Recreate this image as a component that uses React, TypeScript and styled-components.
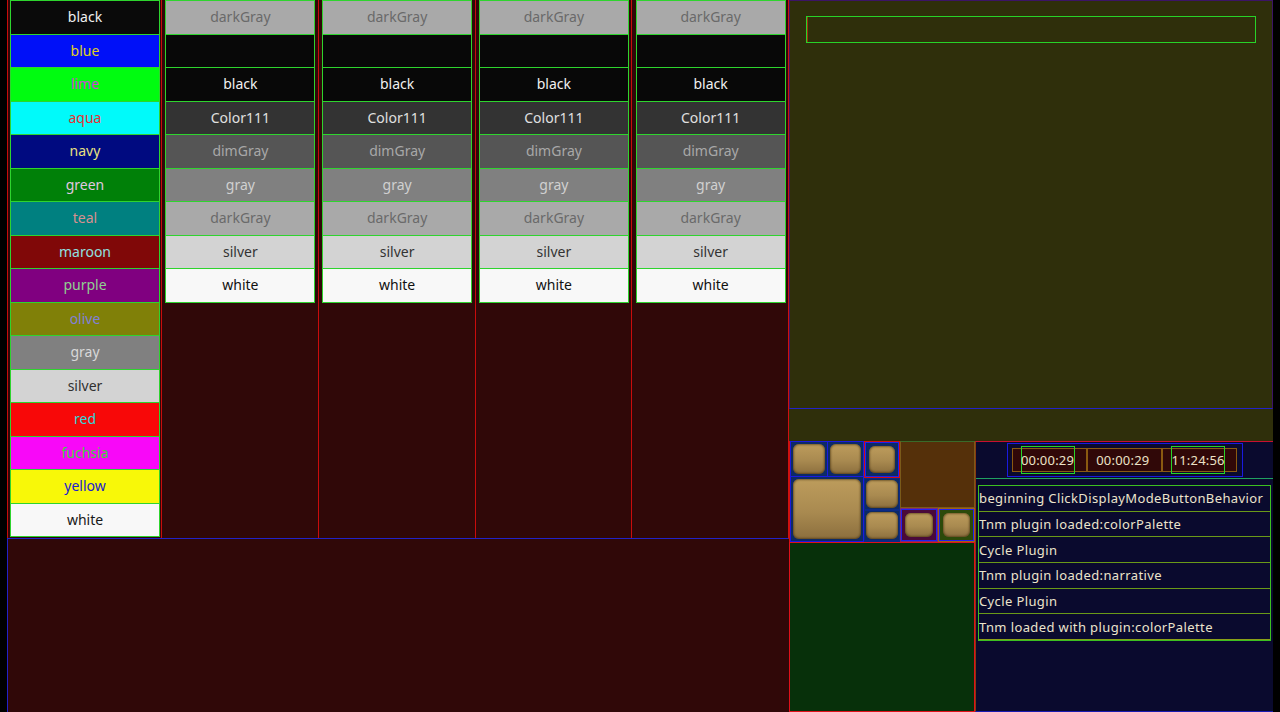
import React from "react";
import styled, { createGlobalStyle } from "styled-components";

const Global = createGlobalStyle`
  html, body { margin: 0; padding: 0; background: #000; }
  body { font-family: "Noto Sans", "DejaVu Sans", sans-serif; }
  * { box-sizing: border-box; }
`;

const Page = styled.div`
  width: 1280px;
  height: 712px;
  display: flex;
  padding-left: 7px;
  padding-right: 7px;
  background: #000;
  overflow: hidden;
`;

const LeftPanel = styled.div`
  width: 782px;
  display: flex;
  flex-direction: column;
  background: #300808;
`;

const ColumnsRow = styled.div`
  height: 539px;
  display: flex;
  border-bottom: 1px solid #2222c8;
  border-right: 1px solid #d01010;
`;

const Column = styled.div<{ $first?: boolean }>`
  flex: ${(p) => (p.$first ? "0 0 154px" : "1")};
  display: flex;
  justify-content: ${(p) => (p.$first ? "flex-start" : "center")};
  padding-left: ${(p) => (p.$first ? "2px" : "1px")};
  align-items: flex-start;
  border-left: 1px solid #c80c0c;
`;

const CellStack = styled.div`
  width: 150px;
  display: flex;
  flex-direction: column;
  gap: 1px;
  padding: 1px;
  background: #2ed42e;
`;

const Cell = styled.div<{ $bg: string; $fg: string }>`
  height: 32.5px;
  display: flex;
  align-items: center;
  justify-content: center;
  background: ${(p) => p.$bg};
  color: ${(p) => p.$fg};
  font-size: 14px;
  line-height: 1;
`;

const LeftBottom = styled.div`
  flex: 1;
  border-left: 1px solid #2222c8;
`;

const RightPanel = styled.div`
  flex: 1;
  display: flex;
  flex-direction: column;
`;

const TopPanel = styled.div`
  height: 409px;
  background: #2f2f0b;
  border: 1px solid #3c1466;
  border-bottom: 1px solid #2222c8;
  padding: 15px 16px;
`;

const InputBox = styled.div`
  height: 27px;
  border: 1px solid #28d228;
  box-shadow: inset 1px 0 0 #a03010;
`;

const Strip = styled.div`
  height: 32px;
  background: #2f2f0b;
`;

const BottomRow = styled.div`
  flex: 1;
  display: flex;
`;

const LeftStack = styled.div`
  width: 186px;
  display: flex;
  flex-direction: column;
`;

const ButtonArea = styled.div`
  height: 101px;
  display: flex;
  border-left: 1px solid #d01010;
`;

const GroupA = styled.div`
  width: 74px;
  display: grid;
  grid-template-columns: 1fr 1fr;
  grid-template-rows: 34px 1fr;
  gap: 1px;
  padding: 1px;
  background: #1a1ae0;
`;

const GroupCell = styled.div<{ $span?: boolean }>`
  background: #0d2a66;
  padding: 2px;
  display: flex;
  ${(p) => (p.$span ? "grid-column: 1 / span 2;" : "")}
`;

const GroupB = styled.div`
  width: 36px;
  display: flex;
  flex-direction: column;
  gap: 2px;
  padding: 1px 1px 2px;
  background: #0b2a86;
`;

const BCell = styled.div<{ $framed?: boolean }>`
  flex: 1;
  display: flex;
  padding: ${(p) => (p.$framed ? "3px" : "1px")};
  background: #0d2a66;
  ${(p) =>
    p.$framed
      ? "border: 1px solid #2020f0; box-shadow: 0 0 0 1px #d01010;"
      : ""}
`;

const GroupC = styled.div`
  width: 75px;
  display: flex;
  flex-direction: column;
`;

const BrownPanel = styled.div`
  height: 67px;
  background: #55300a;
  border: 1px solid #7a5a1a;
  border-top-color: #3a6a2a;
`;

const SmallRow = styled.div`
  flex: 1;
  display: flex;
`;

const SmallCell = styled.div<{ $edge: string }>`
  flex: 1;
  display: flex;
  padding: 1px;
  background: ${(p) => p.$edge};
`;

const SmallInner = styled.div<{ $bg: string }>`
  flex: 1;
  display: flex;
  padding: 3px;
  border: 1px solid #2020f0;
  background: ${(p) => p.$bg};
`;

const GoldButton = styled.div`
  flex: 1;
  border-radius: 6px;
  background: linear-gradient(180deg, #bd9c5c 0%, #a98a50 55%, #8c6f3e 100%);
  box-shadow: inset 0 0 2px 1px rgba(60, 40, 10, 0.55);
`;

const GreenPanel = styled.div`
  flex: 1;
  background: #07300a;
  border: 1px solid #e0101a;
`;

const NavyPanel = styled.div`
  flex: 1;
  display: flex;
  flex-direction: column;
  background: #0a0a2e;
  border-top: 1px solid #c81030;
  border-left: 1px solid #8a3a10;
  border-bottom: 1px solid #1a1ab0;
`;

const ClockRow = styled.div`
  height: 37px;
  display: flex;
  justify-content: center;
  padding-top: 1px;
  border-bottom: 1px solid #20a060;
`;

const ClockBox = styled.div`
  width: 236px;
  height: 34px;
  display: flex;
  align-items: center;
  padding: 0 4px;
  border: 1px solid #1a1ae0;
`;

const Timer = styled.div`
  flex: 1;
  height: 24px;
  display: flex;
  align-items: center;
  padding-left: 8px;
  background: #300808;
  border: 1px solid #8a5a10;
`;

const TimerText = styled.span<{ $outlined?: boolean }>`
  height: 28px;
  width: 54px;
  display: flex;
  align-items: center;
  justify-content: center;
  color: #ece2c6;
  font-size: 13px;
  letter-spacing: 0.2px;
  white-space: nowrap;
  border: 1px solid ${(p) => (p.$outlined ? "#28d228" : "transparent")};
`;

const LogList = styled.div`
  margin: 6px 2px 0 2px;
  display: flex;
  flex-direction: column;
  border: 1px solid #3cc020;
`;

const LogRow = styled.div`
  height: 25.7px;
  display: flex;
  align-items: center;
  padding-left: 0;
  color: #ece4cc;
  font-size: 13px;
  letter-spacing: 0.38px;
  white-space: nowrap;
  border-bottom: 1px solid #6a9a18;
  &:last-child { border-bottom-color: #8aa018; }
`;

const palette: [string, string, string][] = [
  ["black", "#0a0a0a", "#f0f0f0"],
  ["blue", "#0010f8", "#e0d020"],
  ["lime", "#00fc10", "#d040d8"],
  ["aqua", "#00fafa", "#e83030"],
  ["navy", "#000a80", "#e8e080"],
  ["green", "#008008", "#e0c8e0"],
  ["teal", "#008080", "#d89090"],
  ["maroon", "#800808", "#90e0e0"],
  ["purple", "#800080", "#90d090"],
  ["olive", "#808008", "#8080d8"],
  ["gray", "#808080", "#d8d8d8"],
  ["silver", "#d3d3d3", "#303030"],
  ["red", "#f80808", "#30d8d8"],
  ["fuchsia", "#f808f8", "#40d040"],
  ["yellow", "#f8f808", "#2020d0"],
  ["white", "#f8f8f8", "#181818"],
];

const grays: [string, string, string][] = [
  ["darkGray", "#a9a9a9", "#6a6a6a"],
  ["", "#080808", "#fff"],
  ["black", "#080808", "#f0f0f0"],
  ["Color111", "#333333", "#e0e0e0"],
  ["dimGray", "#555555", "#a8a8a8"],
  ["gray", "#808080", "#d0d0d0"],
  ["darkGray", "#a9a9a9", "#6a6a6a"],
  ["silver", "#d3d3d3", "#333333"],
  ["white", "#f8f8f8", "#111111"],
];

const logs = [
  "beginning ClickDisplayModeButtonBehavior",
  "Tnm plugin loaded:colorPalette",
  "Cycle Plugin",
  "Tnm plugin loaded:narrative",
  "Cycle Plugin",
  "Tnm loaded with plugin:colorPalette",
];

const Swatches = ({ items }: { items: [string, string, string][] }) => (
  <CellStack>
    {items.map(([label, bg, fg], i) => (
      <Cell key={i} $bg={bg} $fg={fg}>
        {label}
      </Cell>
    ))}
  </CellStack>
);

export default function App() {
  return (
    <>
      <Global />
      <Page>
        <LeftPanel>
          <ColumnsRow>
            <Column $first>
              <Swatches items={palette} />
            </Column>
            {[0, 1, 2, 3].map((k) => (
              <Column key={k}>
                <Swatches items={grays} />
              </Column>
            ))}
          </ColumnsRow>
          <LeftBottom />
        </LeftPanel>
        <RightPanel>
          <TopPanel>
            <InputBox />
          </TopPanel>
          <Strip />
          <BottomRow>
            <LeftStack>
              <ButtonArea>
                <GroupA>
                  <GroupCell>
                    <GoldButton />
                  </GroupCell>
                  <GroupCell>
                    <GoldButton />
                  </GroupCell>
                  <GroupCell $span>
                    <GoldButton />
                  </GroupCell>
                </GroupA>
                <GroupB>
                  <BCell $framed>
                    <GoldButton />
                  </BCell>
                  <BCell>
                    <GoldButton />
                  </BCell>
                  <BCell>
                    <GoldButton />
                  </BCell>
                </GroupB>
                <GroupC>
                  <BrownPanel />
                  <SmallRow>
                    <SmallCell $edge="#7a2a7a">
                      <SmallInner $bg="#4a0a3a">
                        <GoldButton />
                      </SmallInner>
                    </SmallCell>
                    <SmallCell $edge="#a06018">
                      <SmallInner $bg="#2c4a0a">
                        <GoldButton />
                      </SmallInner>
                    </SmallCell>
                  </SmallRow>
                </GroupC>
              </ButtonArea>
              <GreenPanel />
            </LeftStack>
            <NavyPanel>
              <ClockRow>
                <ClockBox>
                  <Timer>
                    <TimerText $outlined>00:00:29</TimerText>
                  </Timer>
                  <Timer>
                    <TimerText>00:00:29</TimerText>
                  </Timer>
                  <Timer>
                    <TimerText $outlined>11:24:56</TimerText>
                  </Timer>
                </ClockBox>
              </ClockRow>
              <LogList>
                {logs.map((l, i) => (
                  <LogRow key={i}>{l}</LogRow>
                ))}
              </LogList>
            </NavyPanel>
          </BottomRow>
        </RightPanel>
      </Page>
    </>
  );
}
